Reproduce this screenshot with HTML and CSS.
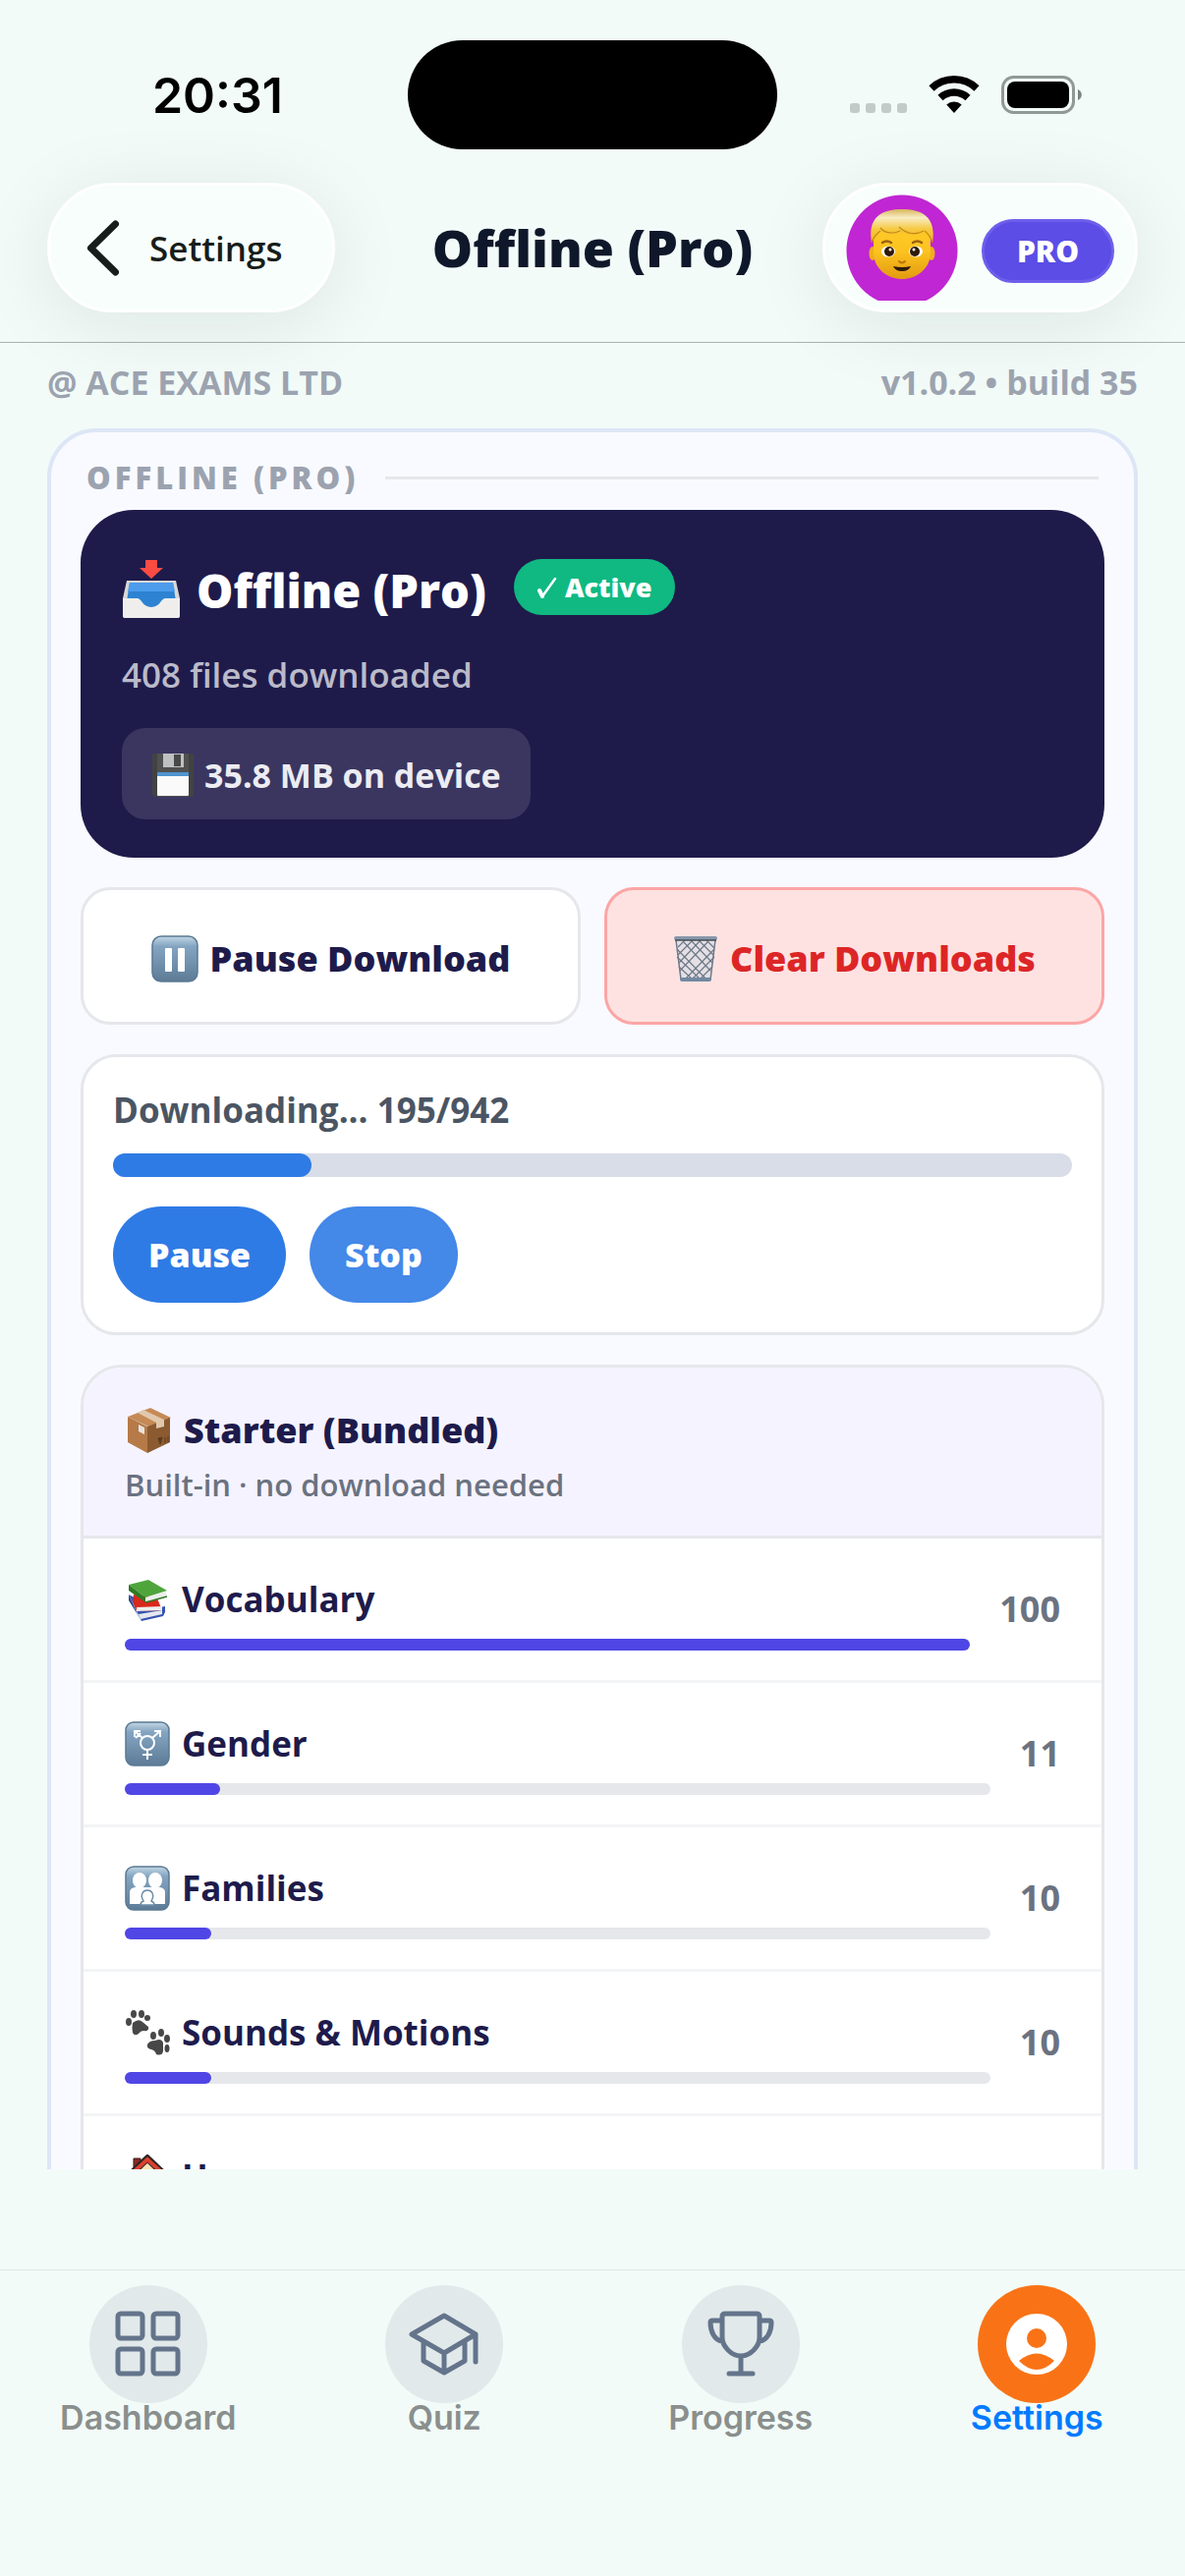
FILE: index.html
```html
<!DOCTYPE html>
<html lang="en">
<head>
<meta charset="utf-8">
<meta name="viewport" content="width=device-width, initial-scale=1">
<title>Offline (Pro)</title>
<link rel="stylesheet" href="styles.css">
</head>
<body>
<svg class="defs" aria-hidden="true">
  <defs>
    <linearGradient id="tile" x1="0" y1="0" x2="0" y2="1">
      <stop offset="0" stop-color="#c3d7e4"/><stop offset=".22" stop-color="#84a5c2"/><stop offset="1" stop-color="#5d7b96"/>
    </linearGradient>
    <linearGradient id="face" x1="0" y1="0" x2="0" y2="1">
      <stop offset="0" stop-color="#ffd02e"/><stop offset=".6" stop-color="#fcc21f"/><stop offset="1" stop-color="#e39a10"/>
    </linearGradient>
    <linearGradient id="hair" x1="0" y1="0" x2="0" y2="1">
      <stop offset="0" stop-color="#d9b45a"/><stop offset=".25" stop-color="#f8ecc4"/><stop offset=".6" stop-color="#f6c93f"/><stop offset="1" stop-color="#eeb022"/>
    </linearGradient>
  </defs>
</svg>
<div class="app">
  <div class="status">
    <div class="status-time">20:31</div>
    <div class="island"></div>
    <div class="status-icons">
      <svg width="58" height="38" viewBox="0 0 58 38" fill="#c3cac7"><rect y="28" width="10" height="10" rx="3"/><rect x="16" y="28" width="10" height="10" rx="3"/><rect x="32" y="28" width="10" height="10" rx="3"/><rect x="48" y="28" width="10" height="10" rx="3"/></svg>
      <svg width="52" height="38" viewBox="0 0 52 38"><path d="M26 38 18.300 29.500a11.500 11.500 0 0 1 15.400 0z"/><g fill="none" stroke="#000" stroke-width="7.500"><path d="M12 22.500a20.500 20.500 0 0 1 28 0"/><path d="M3 13a33.500 33.500 0 0 1 46 0"/></g></svg>
      <svg width="82" height="40" viewBox="0 0 82 40"><rect x="1.500" y="1.500" width="72" height="36" rx="11" fill="none" stroke="#929896" stroke-width="3"/><rect x="6" y="6" width="63" height="27" rx="8"/><path d="M78 14c5 2 5 9 0 11z" fill="#7d8280"/></svg>
    </div>
  </div>

  <header class="header">
    <button class="pill back" type="button">
      <svg width="34" height="57" viewBox="0 0 34 57" fill="none" stroke="#171d1a" stroke-width="7" stroke-linecap="round" stroke-linejoin="round"><path d="M29.500 4 4.500 28.500 29.500 53"/></svg>
      Settings
    </button>
    <h1 class="title">Offline (Pro)</h1>
    <div class="pill account">
      <div class="avatar">
        <svg width="68" height="72" viewBox="0 0 68 72">
          <ellipse cx="4" cy="45" rx="3.500" ry="7" fill="#efae1d"/><ellipse cx="64" cy="45" rx="3.500" ry="7" fill="#efae1d"/>
          <path d="M5 24C6 8 17 2 34 2s28 6 29 22v20c0 17-15 27-29 27S5 61 5 44z" fill="url(#face)"/>
          <path d="M3 34C-1 10 11 0 34 0s35 10 31 34c-1-3-3-8-8-12-8 5-17 5-23 1-8 4-17 3-22-1-5 4-8 9-9 12z" fill="url(#hair)"/>
          <path d="M12 19c5 6 14 6 20 3m-1-4c8 8 18 8 25 4M3 34c1-3 4-8 9-12m53 12c-1-3-3-8-8-12" fill="none" stroke="#c58a16" stroke-width="1.200"/>
          <path d="M14 34c3-2 6-2 9 0m22 0c3-2 6-2 9 0" fill="none" stroke="#9a6210" stroke-width="2.500" stroke-linecap="round"/>
          <ellipse cx="20" cy="43" rx="7" ry="5.500" fill="#fff"/><ellipse cx="48" cy="43" rx="7" ry="5.500" fill="#fff"/>
          <circle cx="21" cy="43" r="5" fill="#2f1a08"/><circle cx="47" cy="43" r="5" fill="#2f1a08"/><circle cx="22" cy="41" r="1.500" fill="#fff"/><circle cx="46" cy="41" r="1.500" fill="#fff"/>
          <path d="M31 53q3 3 6 0" fill="none" stroke="#b87608" stroke-width="2" stroke-linecap="round"/>
          <path d="M25 58q9 2 18 0-2 5-9 5t-9-5z" fill="#2f1a08"/>
        </svg>
      </div>
      <span class="pro">PRO</span>
    </div>
  </header>

  <main class="content">
    <div class="meta"><span>@ ACE EXAMS LTD</span><span>v1.0.2 • build 35</span></div>
    <section class="group">
      <h2 class="group-label">OFFLINE (PRO)</h2>

      <div class="hero">
        <div class="hero-top">
          <svg width="60" height="60" viewBox="0 0 60 60">
            <path d="M5 22h50l4 18v17q0 3-3 3H4q-3 0-3-3V40z" fill="#d9d8d6"/>
            <path d="M8 24h44l4 25H4z" fill="#2d83d2"/><path d="M8 24h44l2 9H6z" fill="#4d9cec"/>
            <path d="M1 40h15c4 0 5 9 14 9s10-9 14-9h15v18q0 2-2 2H3q-2 0-2-2z" fill="#efeeec"/>
            <path d="M24 1h12v8h6L30 20 18 9h6z" fill="#fb4b43"/>
          </svg>
          <h3 class="hero-title">Offline (Pro)</h3>
          <span class="active"><svg width="20" height="22" viewBox="0 0 20 22" fill="none" stroke="#fff" stroke-linecap="round" stroke-linejoin="round"><path d="M2 14 5 20 18 2" stroke-width="2.500"/><path d="M2 14 5 20" stroke-width="4"/></svg>Active</span>
        </div>
        <p class="hero-sub">408 files downloaded</p>
        <div class="chip">
          <svg width="44" height="44" viewBox="0 0 44 44"><path d="M1 0h42v44H4l-3-3z" fill="#505050"/><path d="M1 0h5v44H4l-3-3zM38 0h5v44h-5z" fill="#424242"/><rect x="12" width="21" height="14" fill="#bfc0c2"/><rect x="23" y="1" width="7" height="12" fill="#484848"/><rect x="6" y="19" width="32" height="24" rx="1" fill="#fafafa"/><path d="M6 19h32v4H6z" fill="#4f93cf"/></svg>
          35.8 MB on device
        </div>
      </div>

      <div class="actions">
        <button class="action" type="button">
          <svg width="48" height="48" viewBox="0 0 48 48"><rect x="1" y="1" width="46" height="46" rx="9" fill="url(#tile)" stroke="#5a7993" stroke-width="1.500"/><rect x="14" y="13" width="7" height="24" rx="1" fill="#fff"/><rect x="27" y="13" width="7" height="24" rx="1" fill="#fff"/></svg>
          Pause Download
        </button>
        <button class="action danger" type="button">
          <svg width="46" height="48" viewBox="0 0 46 48"><path d="M3 5h40l-5 39q0 3-4 3H12q-4 0-4-3z" fill="#e3dfe4"/><path d="M4 14 35 46M4 22l25 24M6 32l15 14M10 6l28 30M18 5l22 23M26 5l15 15M34 5l8 8M42 14 11 46M42 22 18 46M40 32 26 46M36 6 7 36M28 5 6 28M20 5 5 20M12 5l-7 7" fill="none" stroke="#6b7685" stroke-width="1.100"/><path d="M3 5l5 40M43 5l-5 40" stroke="#6d7989" stroke-width="1.500"/><rect x="1" y="1" width="44" height="4" rx="2" fill="#8797aa"/><path d="M2 5h42" stroke="#454c55" stroke-width="1.500"/><rect x="7" y="43" width="32" height="4" rx="2" fill="#7388a0"/></svg>
          Clear Downloads
        </button>
      </div>

      <div class="card download">
        <p class="download-label" id="dl">Downloading... 195/942</p>
        <div class="track" role="progressbar" aria-labelledby="dl" aria-valuenow="195" aria-valuemax="942"><div class="fill" style="width:20.7%"></div></div>
        <div class="download-buttons"><button class="round" type="button">Pause</button><button class="round stop" type="button">Stop</button></div>
      </div>

      <div class="card bundle">
        <div class="bundle-head">
          <h3 class="bundle-title">
            <svg width="48" height="48" viewBox="0 0 48 48"><path d="M26 1 47 11 24 20 3 10z" fill="#c58a55"/><path d="M3 10l20 10v27L3 36z" fill="#b67a48"/><path d="M23 20 46 11v25L23 47z" fill="#8b5a30"/><path d="M13 6l6-3 21 10v7l-8 2v-6z" fill="#e0c8ad"/><path d="M14 18l6 3v7l-6-3z" fill="#e6e3e0"/><path d="M34 32l4-1-2 7zM41 31v6M44 30v6" stroke="#5c3a1c" fill="#5c3a1c"/></svg>
            Starter (Bundled)
          </h3>
          <p class="bundle-sub">Built-in · no download needed</p>
        </div>
        <ul class="rows">
          <li class="row">
            <div class="row-main">
              <div class="row-label"><svg width="46" height="46" viewBox="0 0 46 46"><path d="M4 18 30 32l11-2v6l-2 4-22 5z" fill="#3554b4"/><path d="M4 18l9 20 4 7L4 24z" fill="#2a438f"/><path d="M14 38l24-4v4l-22 5z" fill="#e6e8ee"/><path d="M9 18l24 4 5 12-26 1-4-10z" fill="#d9281c"/><path d="M12 31l26-1v4l-26 1z" fill="#eee"/><path d="M4 8 24 3l19 11-22 7z" fill="#4fa53c"/><path d="M4 8v6l17 12v-5z" fill="#2f7a25"/><path d="M21 21l21-6v5l-21 6z" fill="#eceeea"/><path d="M21 26l22-6" stroke="#2f7a25" stroke-width="1.500"/></svg>Vocabulary</div>
              <div class="bar"><div class="bar-fill" style="width:100%"></div></div>
            </div>
            <span class="count">100</span>
          </li>
          <li class="row">
            <div class="row-main">
              <div class="row-label"><svg width="46" height="46" viewBox="0 0 46 46"><rect x="1" y="1" width="44" height="44" rx="8" fill="url(#tile)" stroke="#5a7993" stroke-width="1.500"/><g fill="none" stroke="#fff" stroke-width="2"><circle cx="23" cy="22" r="7"/><path d="M28 17l8-7m-6 0h6v6M18 17l-8-7m6 0h-6v6m1 1 5-5M23 29v10m-5-5h10"/></g></svg>Gender</div>
              <div class="bar"><div class="bar-fill" style="width:11%"></div></div>
            </div>
            <span class="count">11</span>
          </li>
          <li class="row">
            <div class="row-main">
              <div class="row-label"><svg width="46" height="46" viewBox="0 0 46 46"><rect x="1" y="1" width="44" height="44" rx="8" fill="url(#tile)" stroke="#5a7993" stroke-width="1.500"/><g fill="#fff"><ellipse cx="15" cy="15" rx="7" ry="8"/><ellipse cx="31" cy="15" rx="7" ry="8"/><path d="M5 39V27q0-4 5-5h26q5 1 5 5v12z"/></g><path d="M23 25c5 0 7 5 5 9l-1 2q3 1 3 4H16q0-3 3-4l-1-2c-2-4 0-9 5-9z" fill="#fff" stroke="#6c8ca8" stroke-width="1.500"/></svg>Families</div>
              <div class="bar"><div class="bar-fill" style="width:10%"></div></div>
            </div>
            <span class="count">10</span>
          </li>
          <li class="row">
            <div class="row-main">
              <div class="row-label"><svg width="46" height="46" viewBox="0 0 46 46" fill="#484848"><ellipse cx="4" cy="12" rx="3" ry="4"/><ellipse cx="9" cy="4" rx="3" ry="4"/><ellipse cx="17" cy="4" rx="3" ry="4"/><ellipse cx="23" cy="8" rx="3" ry="3"/><path d="M8 13q6-5 10-1l6 5q1 5-5 4-3 0-5 3-4 3-6-1-1-6 0-10z"/><ellipse cx="29" cy="26" rx="3" ry="4"/><ellipse cx="37" cy="23" rx="3" ry="4"/><ellipse cx="43" cy="29" rx="3" ry="4"/><ellipse cx="43" cy="39" rx="2.500" ry="4"/><path d="M23 35q2-4 8-4 6-3 8 2l0 9q-1 5-7 3-1-4-5-5-5-1-4-5z"/></svg>Sounds &amp; Motions</div>
              <div class="bar"><div class="bar-fill" style="width:10%"></div></div>
            </div>
            <span class="count">10</span>
          </li>
          <li class="row">
            <div class="row-main">
              <div class="row-label"><svg width="46" height="46" viewBox="0 0 46 46"><path d="M9 18V4h7v8" fill="#8a2a20" stroke="#3a1a16"/><path d="M7 22v21h32V22L23 8z" fill="#fae3b8"/><path d="M2 24 23 4l21 20" fill="none" stroke="#2c2320" stroke-width="7"/><path d="M2 24 23 5l21 19" fill="none" stroke="#d9402f" stroke-width="4"/><path d="M18 43V30h10v13z" fill="#8a5a2e"/></svg>Home</div>
              <div class="bar"></div>
            </div>
          </li>
        </ul>
      </div>
    </section>
  </main>

  <nav class="tabs">
    <a class="tab" href="#dashboard"><span class="tab-icon"><svg width="72" height="72" viewBox="0 0 72 72"><rect x="5" y="5" width="25" height="25" rx="3"/><rect x="41" y="5" width="25" height="25" rx="3"/><rect x="5" y="41" width="25" height="25" rx="3"/><rect x="41" y="41" width="25" height="25" rx="3"/></svg></span>Dashboard</a>
    <a class="tab" href="#quiz"><span class="tab-icon"><svg width="72" height="72" viewBox="0 0 72 72"><path d="M36 7 68 26 36 45 3 26zM15 34v19l21 12 21-12V34M36 45v20M68 26v28"/></svg></span>Quiz</a>
    <a class="tab" href="#progress"><span class="tab-icon"><svg width="72" height="72" viewBox="0 0 72 72"><path d="M20 5h32q3 0 3 3v21c0 9-9 19-19 19s-19-10-19-19V8q0-3 3-3zM17 12H7q-2 0-2 2c0 9 4 18 12 19M55 12h10q2 0 2 2c0 9-4 18-12 19M36 48v18M24 66h24"/></svg></span>Progress</a>
    <a class="tab current" href="#settings" aria-current="page"><span class="tab-icon"><svg width="72" height="72" viewBox="0 0 72 72"><circle cx="36" cy="36" r="31"/><g class="cut"><circle cx="36" cy="30" r="10"/><path d="M18 53q18-15 36 0-18 18-36 0z"/></g></svg></span>Settings</a>
  </nav>
</div>
</body>
</html>
```

FILE: styles.css
```css
* { box-sizing: border-box; }
html, body { margin: 0; height: 100%; }
body {
  background: #f2fbf8;
  font-family: "Open Sans", "Noto Sans", sans-serif;
  font-size: 35px;
  line-height: 48px;
}
h1, h2, h3, p, ul { margin: 0; padding: 0; }
ul { list-style: none; }
svg { display: block; flex: none; }
button { font-family: inherit; cursor: pointer; }
.defs { position: absolute; width: 0; height: 0; }

.app { height: 100vh; display: flex; flex-direction: column; }

/* status bar */
.status {
  flex: none;
  display: grid;
  grid-template-columns: 1fr 376px 1fr;
  align-items: center;
  padding-top: 41px;
}
.status-time {
  padding-left: 28px;
  text-align: center;
  font: 600 50px/60px Inter, sans-serif;
}
.island { height: 111px; border-radius: 56px; background: #000; }
.status-icons {
  display: flex;
  justify-content: center;
  gap: 22px;
  padding-right: 32px;
}

/* header */
.header {
  flex: none;
  display: grid;
  grid-template-columns: 1fr auto 1fr;
  align-items: center;
  padding: 34px 48px 30px;
  border-bottom: 1px solid #a9b0ad;
}
.pill {
  display: flex;
  align-items: center;
  height: 132px;
  border: 3px solid #fff;
  border-radius: 66px;
  background: #f8fefc;
  box-shadow: 0 12px 80px rgba(0, 20, 10, .09);
}
.back {
  justify-self: start;
  gap: 30px;
  padding: 0 50px 0 37px;
  font-size: 35px;
  font-weight: 600;
  color: #171d1a;
}
.title { font-size: 52px; line-height: 66px; font-weight: 800; color: #0f172a; }
.account { justify-self: end; gap: 24px; padding: 0 21px; }
.avatar {
  width: 114px;
  height: 108px;
  display: flex;
  justify-content: center;
  padding-top: 15px;
  background: radial-gradient(circle at 57px 57px, #c026d3 56px, transparent 57px);
}
.pro {
  width: 135px;
  height: 65px;
  margin-top: 6px;
  border: 3px solid #6d5fea;
  border-radius: 33px;
  background: #5b4de6;
  color: #fff;
  font-size: 30px;
  line-height: 59px;
  font-weight: 800;
  text-align: center;
}

/* content */
.content { flex: 1; min-height: 0; overflow: hidden; padding: 18px 48px 0; }
.meta {
  display: flex;
  justify-content: space-between;
  margin-bottom: 25px;
  font-size: 34px;
  line-height: 44px;
  font-weight: 700;
  color: #9ca3af;
}
.group {
  display: flex;
  flex-direction: column;
  gap: 30px;
  padding: 24px 30px 30px;
  border: 4px solid #dde6f6;
  border-radius: 50px;
  background: #f9faff;
}
.group-label {
  display: flex;
  align-items: center;
  gap: 27px;
  margin-bottom: -19px;
  padding: 0 6px;
  font-size: 31px;
  line-height: 44px;
  font-weight: 800;
  letter-spacing: 4px;
  color: #9ca3af;
}
.group-label::after { content: ""; flex: 1; height: 3px; background: #e5e7eb; }

.hero {
  padding: 50px 42px 39px;
  border-radius: 54px;
  background: #1e1b4b;
  color: #fff;
}
.hero-top { display: flex; align-items: flex-start; }
.hero-title { margin: 0 28px 0 16px; font-size: 47px; line-height: 64px; font-weight: 800; }
.active {
  display: flex;
  align-items: center;
  gap: 8px;
  height: 57px;
  padding: 0 24px;
  border-radius: 29px;
  background: #10b981;
  font-size: 27px;
  font-weight: 800;
}
.hero-sub { margin: 30px 0; color: #bbbac9; font-size: 35px; font-weight: 600; }
.chip {
  display: flex;
  align-items: center;
  gap: 10px;
  width: fit-content;
  padding: 24px 30px 21px;
  border-radius: 24px;
  background: #3a3660;
  color: #ececf2;
  font-size: 34px;
  font-weight: 700;
}

.actions { display: grid; grid-template-columns: 1fr 1fr; gap: 24px; }
.action {
  display: flex;
  align-items: center;
  justify-content: center;
  gap: 12px;
  padding: 45px 0 39px;
  border: 3px solid #e5e7eb;
  border-radius: 30px;
  background: #fff;
  color: #1e1b4b;
  font-size: 36px;
  line-height: 50px;
  font-weight: 800;
}
.danger { border-color: #fca5a5; background: #fee2e2; color: #dc2626; }

.card { border: 3px solid #e5e7eb; border-radius: 36px; background: #fff; }
.download { padding: 30px; }
.download-label { color: #4b5563; font-weight: 700; }
.track { height: 24px; margin: 20px 0 30px; border-radius: 12px; background: #d9dde8; }
.fill { height: 100%; border-radius: 12px; background: #2f7be5; }
.download-buttons { display: flex; gap: 24px; }
.round {
  height: 98px;
  padding: 0 36px;
  border: 0;
  border-radius: 49px;
  background: #2f7be5;
  color: #fff;
  font-size: 34px;
  font-weight: 800;
}
.stop { background: #4488e8; }

.bundle { overflow: hidden; border-radius: 42px; }
.bundle-head { padding: 39px 42px 30px; border-bottom: 3px solid #e5e7eb; background: #f5f3ff; }
.bundle-title {
  display: flex;
  align-items: center;
  gap: 12px;
  font-size: 36px;
  line-height: 50px;
  font-weight: 800;
  color: #1e1b4b;
}
.bundle-sub { margin-top: 8px; font-size: 31px; line-height: 44px; font-weight: 600; color: #6b7280; }
.row {
  display: flex;
  align-items: center;
  gap: 30px;
  padding: 30px 42px;
  border-bottom: 3px solid #f3f4f6;
}
.row-main { flex: 1; padding-top: 8px; }
.row-label { display: flex; align-items: center; gap: 12px; font-weight: 700; color: #1e1b4b; }
.bar { height: 12px; margin-top: 16px; border-radius: 6px; background: #e5e7eb; }
.bar-fill { height: 100%; border-radius: 6px; background: #4f46e5; }
.count { font-size: 36px; font-weight: 700; color: #6b7280; }

/* tab bar */
.tabs {
  flex: none;
  display: grid;
  grid-template-columns: repeat(4, 1fr);
  margin-top: 102px;
  padding: 15px 0 146px;
  border-top: 1px solid #dfe8e5;
}
.tab {
  display: flex;
  flex-direction: column;
  align-items: center;
  font: 600 34px/30px Inter, sans-serif;
  color: #8a8f8d;
  text-decoration: none;
}
.tab-icon {
  display: grid;
  place-items: center;
  width: 120px;
  height: 120px;
  border-radius: 50%;
  background: #e1e9ea;
  fill: none;
  stroke: #64748b;
  stroke-width: 5;
  stroke-linecap: round;
  stroke-linejoin: round;
}
.current { color: #007aff; }
.current .tab-icon { background: #f97316; fill: #fff; stroke: none; }
.cut { fill: #f97316; }
```
